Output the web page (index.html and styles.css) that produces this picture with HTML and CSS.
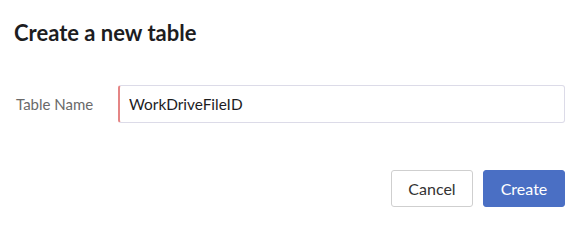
FILE: index.html
```html
<!DOCTYPE html>
<html>
<head>
    <title>Create a new table</title>
    <link rel="stylesheet" href="styles.css">
</head>
<body>
    <section class="dialog">
        <h1 class="title">Create a new table</h1>
        <div class="field">
            <label class="label" for="table-name">Table Name</label>
            <input class="input" id="table-name" type="text" value="WorkDriveFileID">
        </div>
        <div class="actions">
            <button class="btn btn-cancel">Cancel</button>
            <button class="btn btn-primary">Create</button>
        </div>
    </section>
</body>
</html>
```

FILE: styles.css
```css
:root {
    --color-text: #1d1d1f;
    --color-label: #6a6a6a;
    --color-border: #dcdbe8;
    --color-error: #e58585;
    --color-primary: #4a6fc4;
}

html {
    box-sizing: border-box;
}

*, *::before, *::after {
    box-sizing: inherit;
}

body {
    margin: 0;
    font-family: Lato, "Open Sans", sans-serif;
    color: var(--color-text);
    background: #fff;
}

.dialog {
    width: 586px;
    padding: 19px 21px 0 14px;
}

.title {
    margin: 0;
    font-size: 22px;
    font-weight: 700;
    line-height: 28px;
}

.field {
    display: flex;
    align-items: center;
    margin-top: 38px;
}

.label {
    width: 104px;
    padding-left: 2px;
    font-size: 15px;
    color: var(--color-label);
}

.input {
    flex: 1;
    height: 38px;
    padding: 0 10px 0 9px;
    border: 1px solid var(--color-border);
    border-left: 2px solid var(--color-error);
    border-radius: 3px;
    font-family: inherit;
    font-size: 15.4px;
    color: var(--color-text);
    outline: none;
}

.actions {
    display: flex;
    justify-content: flex-end;
    gap: 10px;
    margin-top: 47px;
}

.btn {
    height: 37px;
    border-radius: 3px;
    font-family: inherit;
    font-size: 16px;
    cursor: pointer;
}

.btn-cancel {
    width: 82px;
    background: #fff;
    border: 1px solid #cfcfcf;
    color: #333;
}

.btn-primary {
    width: 82px;
    background: var(--color-primary);
    border: 1px solid var(--color-primary);
    color: #fff;
}
```
